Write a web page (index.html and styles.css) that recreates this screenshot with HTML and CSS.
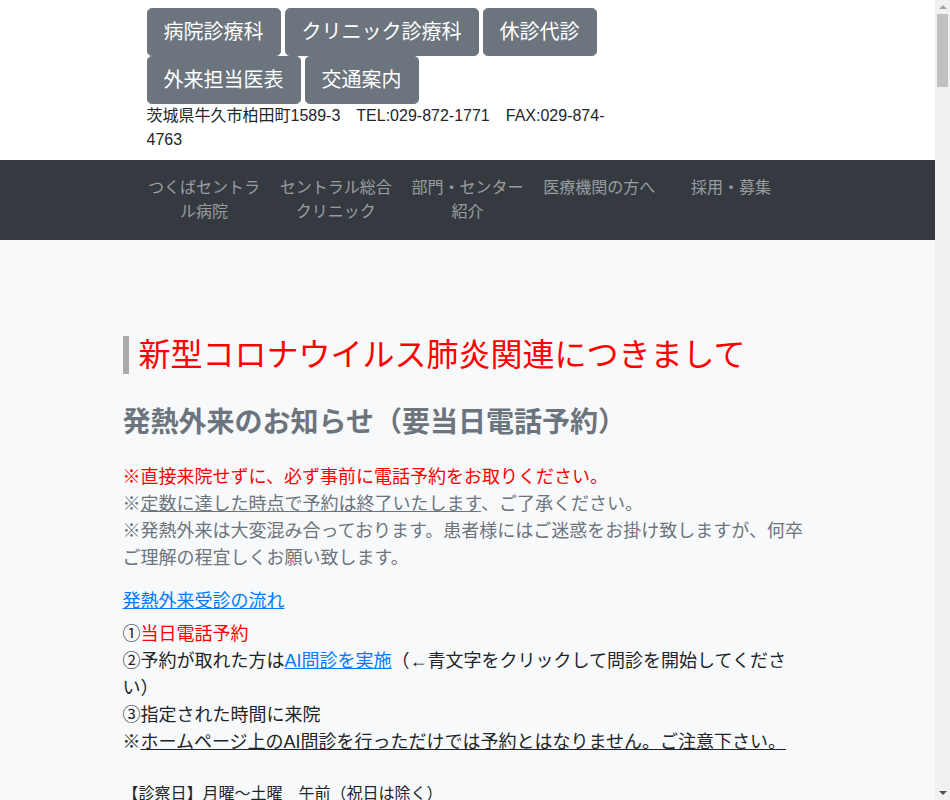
FILE: index.html
```html
<!DOCTYPE html>
<html lang="ja">

<head>
    <meta charset="UTF-8" />
    <meta name="viewport" content="width=device-width, initial-scale=1" />
    <title>発熱外来のお知らせ</title>
    <link rel="stylesheet" href="styles.css">
</head>

<body>
    <header class="top">
        <div class="container">
            <div class="top-inner">
                <div class="top-buttons">
                    <a class="btn" href="#">病院診療科</a>
                    <a class="btn" href="#">クリニック診療科</a>
                    <a class="btn" href="#">休診代診</a>
                    <a class="btn" href="#">外来担当医表</a>
                    <a class="btn" href="#">交通案内</a>
                </div>
                <p class="address">茨城県牛久市柏田町1589-3　TEL:029-872-1771　FAX:029-874-4763</p>
            </div>
        </div>
    </header>

    <nav class="navbar">
        <div class="container">
            <ul class="nav-list">
                <li><a href="#">つくばセントラル病院</a></li>
                <li><a href="#">セントラル総合クリニック</a></li>
                <li><a href="#">部門・センター紹介</a></li>
                <li><a href="#">医療機関の方へ</a></li>
                <li><a href="#">採用・募集</a></li>
            </ul>
        </div>
    </nav>

    <main class="main">
        <div class="container">
            <h2 class="notice-title">新型コロナウイルス肺炎関連につきまして</h2>
            <h3 class="notice-sub">発熱外来のお知らせ（要当日電話予約）</h3>

            <p class="notice-text">
                <span class="red">※直接来院せずに、必ず事前に電話予約をお取りください。</span><br>
                ※<u>定数に達した時点で予約は終了いたします</u>、ご了承ください。<br>
                ※発熱外来は大変混み合っております。患者様にはご迷惑をお掛け致しますが、何卒ご理解の程宜しくお願い致します。
            </p>

            <p class="flow-link"><a href="#">発熱外来受診の流れ</a></p>

            <p class="flow">
                ①<span class="red">当日電話予約</span><br>
                ②予約が取れた方は<a href="#">AI問診を実施</a>（←青文字をクリックして問診を開始してください）<br>
                ③指定された時間に来院<br>
                ※<u>ホームページ上のAI問診を行っただけでは予約とはなりません。ご注意下さい。 </u>
            </p>

            <p class="schedule">【診察日】月曜〜土曜　午前（祝日は除く）<br>
                【受付時間】8:30〜11:00<br>
                【電話番号】029-872-1771（代表）</p>

            <p class="schedule">※発熱外来の受診は予約制です。<br>
                ※保険証・お薬手帳をお持ちください。</p>
        </div>
    </main>

    <footer class="footer">
        <div class="container">
            <p>医療法人社団 常仁会　つくばセントラル病院</p>
        </div>
    </footer>

    <!-- スクロールバー（見た目だけ） -->
    <div class="scrollbar">
        <span class="arrow-up"></span>
        <span class="thumb"></span>
        <span class="arrow-down"></span>
    </div>
</body>

</html>
```

FILE: styles.css
```css
body {
    margin: 0 15px 0 0;
    font-family: "Liberation Sans", "Noto Sans CJK JP", sans-serif;
    font-size: 16px;
    line-height: 1.5;
    color: #212529;
    background: #fff;
}

a {
    color: #007bff;
}

.container {
    max-width: 690px;
    margin: 0 auto;
    padding: 0 15px;
}

/* ヘッダー */
.top {
    padding: 8px 0;
}

.top-inner {
    margin-left: 24px;
    width: 470px;
}

.top-buttons {
    display: flex;
    flex-wrap: wrap;
    column-gap: 4px;
}

.btn {
    display: inline-block;
    padding: 8px 16px;
    font-size: 20px;
    line-height: 1.5;
    color: #fff;
    background: #6c757d;
    border: 1px solid #6c757d;
    border-radius: 4.8px;
    text-decoration: none;
}

.address {
    margin: 0;
}

/* ナビ */
.navbar {
    background: #343a40;
    padding: 16px 0;
}

.nav-list {
    display: flex;
    list-style: none;
    margin: 0;
    padding: 0 15.5px;
}

.nav-list li {
    flex: 1;
    padding: 0 8px;
    text-align: center;
}

.nav-list a {
    color: rgba(255, 255, 255, 0.5);
    text-decoration: none;
}

/* 本文 */
.main {
    background: #f8f9fa;
    padding: 96px 0 80px;
}

.notice-title {
    margin: 0;
    padding-left: 10px;
    border-left: 6px solid #aaa;
    font-size: 32px;
    font-weight: normal;
    line-height: 1.2;
    color: #f00;
}

.notice-sub {
    margin: 32px 0 0;
    font-size: 28px;
    line-height: 1.2;
    color: #6c757d;
}

.notice-text {
    margin: 24px 0 0;
    font-size: 18px;
    color: #6c757d;
}

.red {
    color: #f00;
}

.flow-link {
    margin: 16px 0 0;
    font-size: 18px;
}

.flow {
    margin: 6px 0 0;
    font-size: 18px;
}

.schedule {
    margin: 26px 0 0;
}

.footer {
    background: #343a40;
    color: rgba(255, 255, 255, 0.5);
    padding: 30px 0;
}

.footer p {
    margin: 0;
}

/* スクロールバー */
.scrollbar {
    position: fixed;
    top: 0;
    right: 0;
    width: 15px;
    height: 100vh;
    background: #f1f1f1;
    display: flex;
    flex-direction: column;
    align-items: center;
}

.arrow-up {
    margin-top: 5px;
    border-left: 4px solid transparent;
    border-right: 4px solid transparent;
    border-bottom: 4px solid #a3a3a3;
}

.thumb {
    margin-top: 5px;
    width: 11px;
    height: 73px;
    background: #c1c1c1;
}

.arrow-down {
    margin-top: auto;
    margin-bottom: 5px;
    border-left: 4px solid transparent;
    border-right: 4px solid transparent;
    border-top: 4px solid #505050;
}
```
